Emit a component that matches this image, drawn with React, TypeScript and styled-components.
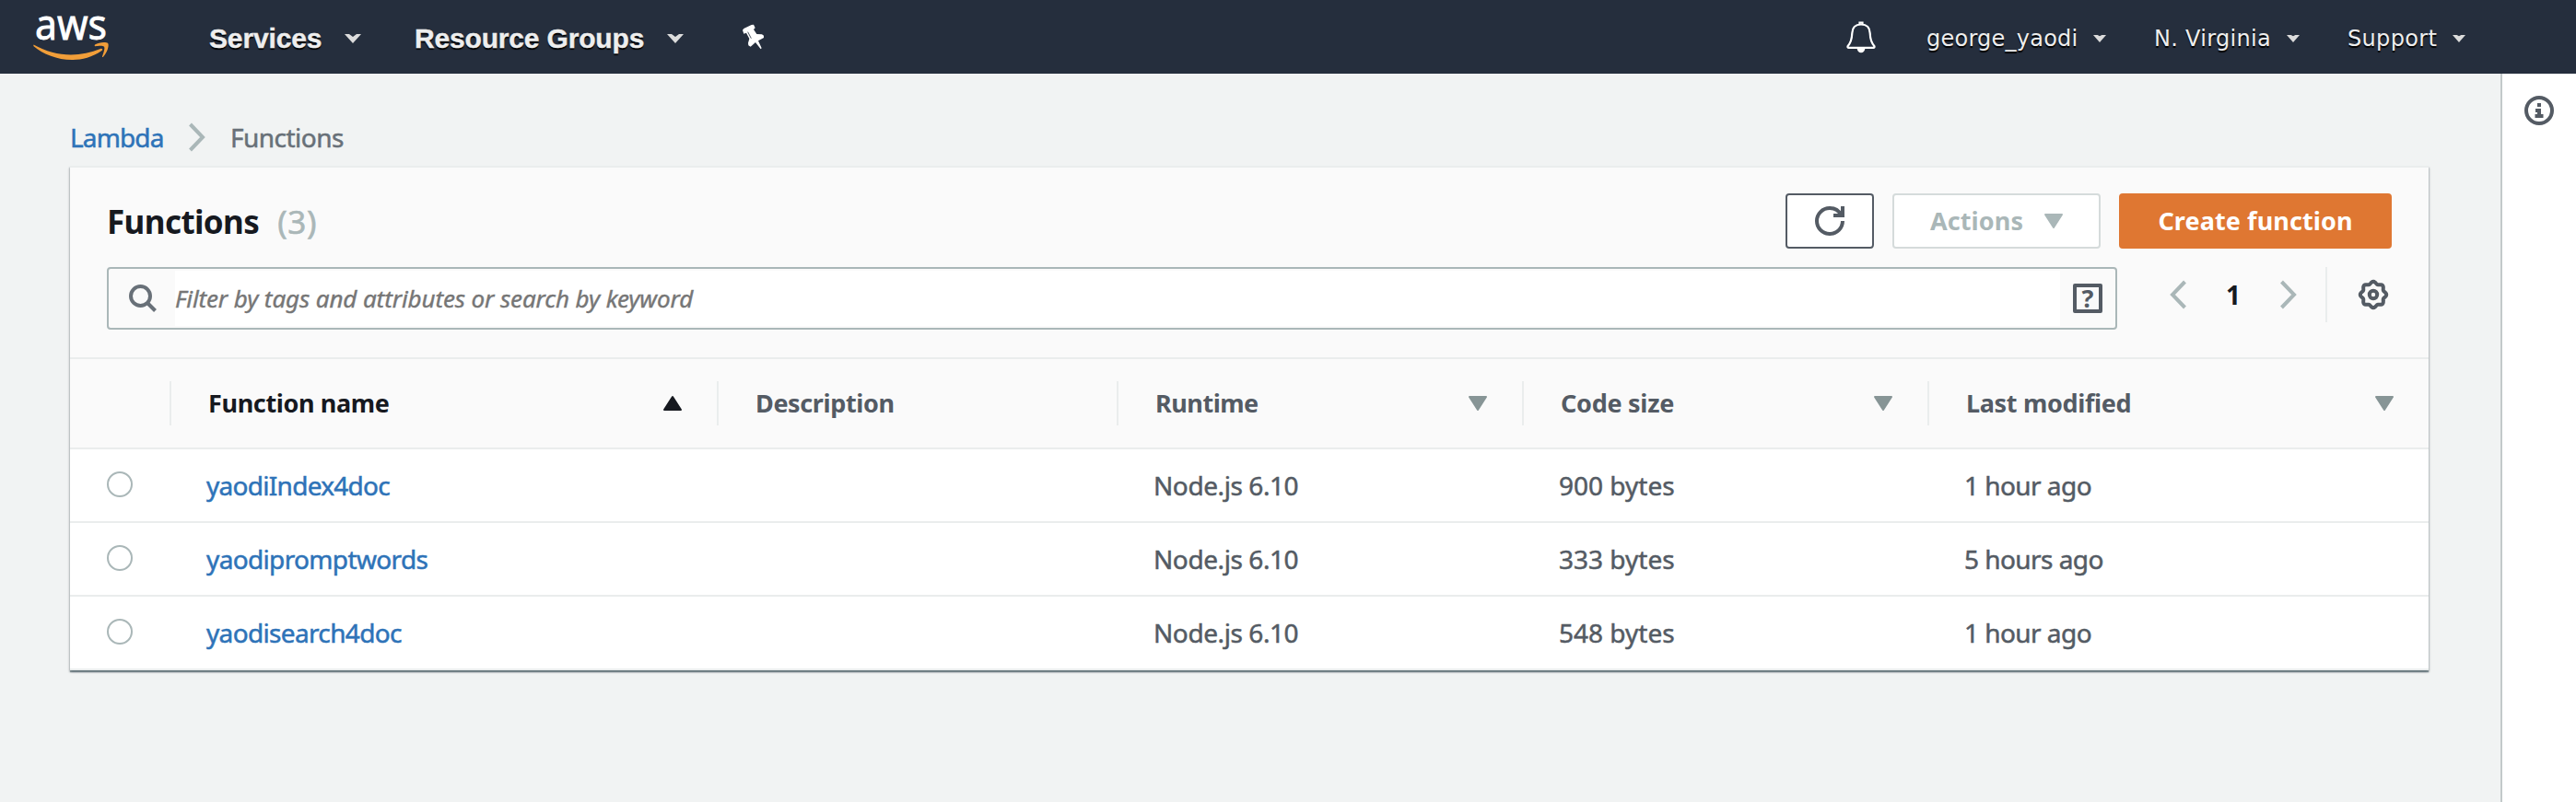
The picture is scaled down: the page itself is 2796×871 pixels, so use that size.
import React from 'react';
import styled, { createGlobalStyle } from 'styled-components';

const GlobalStyle = createGlobalStyle`
  * { box-sizing: border-box; }
  body {
    margin: 0;
    background: #f1f3f3;
    font-family: 'Noto Sans', 'Open Sans', sans-serif;
    font-size: 28px;
    color: #545b64;
  }
  svg { display: block; flex: none; overflow: visible; }
`;

const Page = styled.div`
  display: flex;
  flex-direction: column;
  height: 871px;
  overflow: hidden;
`;

const NavBar = styled.header`
  display: flex;
  align-items: center;
  justify-content: space-between;
  flex: none;
  height: 80px;
  padding: 4px 120px 0 36px;
  background: #252e3d;
`;

const NavGroup = styled.div`
  display: flex;
  align-items: center;
  height: 76px;
`;

const Logo = styled.svg`
  margin-top: -7px;
  margin-right: 107px;
`;

const NavItem = styled.div<{ $width: number; $gap: number; $strong?: boolean; $track?: number }>`
  display: flex;
  align-items: center;
  justify-content: space-between;
  width: ${p => p.$width}px;
  margin-right: ${p => p.$gap}px;
  font-family: ${p => (p.$strong ? "'Liberation Sans'" : "'DejaVu Sans'")}, sans-serif;
  font-size: ${p => (p.$strong ? 30 : 24)}px;
  font-weight: ${p => (p.$strong ? 700 : 400)};
  -webkit-text-stroke: ${p => (p.$strong ? 0.4 : 0)}px #eee;
  letter-spacing: ${p => p.$track ?? 0}px;
  line-height: 40px;
  color: #eee;
  text-shadow: 0 2px 1px #000;
  white-space: nowrap;
`;

const Bell = styled.svg`
  margin: -2px 55px 0 0;
`;

const Pin = styled.svg`
  margin-top: -4px;
`;

const Body = styled.div`
  display: flex;
  flex: 1;
`;

const Main = styled.main`
  flex: 1;
  padding: 46px 78px 0 76px;
`;

const HelpRail = styled.aside`
  width: 82px;
  padding: 24px 0 0 24px;
  background: #fff;
  border-left: 2px solid #c3c9ca;
`;

const Breadcrumb = styled.nav`
  display: flex;
  align-items: center;
  height: 46px;
  margin-bottom: 8px;
  line-height: 46px;
  -webkit-text-stroke: 0.5px;
`;

const CrumbLink = styled.a`
  width: 129px;
  letter-spacing: -0.86px;
  color: #2e73b8;
`;

const Crumb = styled.span`
  margin-left: 27px;
  letter-spacing: -0.52px;
  color: #687078;
`;

const Card = styled.section`
  border-top: 2px solid #eaeded;
  background: #fff;
  box-shadow: 0 2px 1px rgba(0, 28, 36, 0.32), 1px 2px 2px rgba(0, 28, 36, 0.22), -1px 2px 2px rgba(0, 28, 36, 0.22);
`;

const CardHeader = styled.div`
  height: 208px;
  padding: 28px 40px 0;
  background: #fafafa;
  border-bottom: 2px solid #eaeded;
`;

const TitleRow = styled.div`
  display: flex;
  align-items: center;
  height: 60px;
  margin-bottom: 20px;
`;

const Title = styled.h2`
  flex: 1;
  margin: 2px 0 0;
  font-size: 35px;
  line-height: 60px;
  letter-spacing: -0.6px;
  color: #16191f;
`;

const Count = styled.span`
  margin-left: 20px;
  font-weight: 400;
  letter-spacing: 0.6px;
  -webkit-text-stroke: 0.6px;
  color: #aab7b8;
`;

const Button = styled.button<{ $width: number; $kind: 'normal' | 'disabled' | 'primary' }>`
  display: flex;
  align-items: center;
  justify-content: center;
  width: ${p => p.$width}px;
  height: 60px;
  margin: 0 0 0 20px;
  padding: 0;
  border: 2px solid ${p => ({ normal: '#545b64', disabled: '#d5dbdb', primary: '#df7732' })[p.$kind]};
  border-radius: 4px;
  background: ${p => (p.$kind === 'primary' ? '#df7732' : '#fff')};
  color: ${p => ({ normal: '#545b64', disabled: '#aab7b8', primary: '#fff' })[p.$kind]};
  font: 700 27px/54px 'Noto Sans', sans-serif;
  gap: 23px;
`;

const ButtonLabel = styled.span<{ $track: number }>`
  letter-spacing: ${p => p.$track}px;
`;

const FilterRow = styled.div`
  display: flex;
  align-items: flex-start;
`;

const SearchBox = styled.div`
  display: flex;
  align-items: center;
  width: 2182px;
  height: 68px;
  padding-left: 22px;
  border: 2px solid #aab7b8;
  border-radius: 4px;
`;

const SearchInput = styled.div`
  width: 2046px;
  height: 60px;
  margin: 0 14px 0 20px;
  background: #fff;
  color: #767676;
  font-size: 26px;
  font-style: italic;
  line-height: 60px;
  letter-spacing: -0.11px;
  -webkit-text-stroke: 0.4px;
`;

const Pager = styled.div`
  display: flex;
  align-items: center;
  height: 60px;
  width: 228px;
  padding-left: 57px;
  border-right: 2px solid #eaeded;
`;

const PageNumber = styled.span`
  width: 102px;
  text-align: center;
  font-size: 28px;
  font-weight: 700;
  line-height: 60px;
  color: #16191f;
`;

const Gear = styled.svg`
  margin: 14px 0 0 34px;
`;

const Columns = styled.div`
  display: grid;
  grid-template-columns: 110px 594px 434px 440px 440px 1fr;
  align-items: center;
`;

const HeadRow = styled(Columns)`
  height: 98px;
  background: #fafafa;
  border-bottom: 2px solid #eaeded;
`;

const HeadCell = styled.div<{ $active?: boolean; $last?: boolean; $track?: number }>`
  display: flex;
  align-items: center;
  justify-content: space-between;
  height: 48px;
  padding: 0 38px 0 40px;
  border-right: ${p => (p.$last ? 0 : 2)}px solid #eaeded;
  color: ${p => (p.$active ? '#16191f' : '#545b64')};
  font-size: 27px;
  font-weight: 700;
  line-height: 46px;
  letter-spacing: ${p => p.$track ?? 0}px;
  white-space: nowrap;
`;

const Row = styled(Columns)`
  height: 80px;
  border-bottom: 2px solid #eaeded;
  background: #fff;
`;

const Radio = styled.span`
  width: 28px;
  height: 28px;
  margin: -2px 0 0 40px;
  border: 2px solid #aab7b8;
  border-radius: 50%;
`;

const Cell = styled.div<{ $track?: number }>`
  padding-left: 38px;
  line-height: 78px;
  letter-spacing: ${p => p.$track ?? 0}px;
  -webkit-text-stroke: 0.5px;
`;

const NameLink = styled.a`
  color: #2e73b8;
`;

const NavCaret = ({ small }: { small?: boolean }) => (
  <svg width={small ? 14 : 18} height={small ? 8 : 10} viewBox="0 0 18 10" preserveAspectRatio="none">
    <path d={small ? 'M0 0H6L9 1.5L12 0H18L9 10Z' : 'M0 0H5L9 3L13 0H18L9 10Z'} fill="#dcdcdc" />
  </svg>
);

const Angle = ({ left }: { left?: boolean }) => (
  <svg width="18" height="32" viewBox="0 0 18 32" fill="none" stroke="#aab7b8" strokeWidth="4">
    <path d={left ? 'M16.5 2L3 16L16.5 30' : 'M1.5 2L15 16L1.5 30'} />
  </svg>
);

const Triangle = ({ up, color }: { up?: boolean; color: string }) => (
  <svg width="20" height="16" viewBox="0 0 20 16" fill={color} stroke={color} strokeWidth="2" strokeLinejoin="round">
    <path d={up ? 'M1 15H19L10 1Z' : 'M1 1H19L10 15Z'} />
  </svg>
);

const gearPath = Array.from({ length: 96 }, (_, i) => {
  const a = (i / 96) * Math.PI * 2;
  const r = 13 + 1.2 * Math.cos(a * 8);
  return `${i ? 'L' : 'M'}${(16 + r * Math.sin(a)).toFixed(2)} ${(16 - r * Math.cos(a)).toFixed(2)}`;
}).join('') + 'Z';

const heads = [
  { label: 'Function name', track: -0.36, sort: 'up' },
  { label: 'Description', track: -0.38, sort: '' },
  { label: 'Runtime', track: -0.47, sort: 'down' },
  { label: 'Code size', track: -0.27, sort: 'down' },
  { label: 'Last modified', track: -0.33, sort: 'down' },
];

const rows = [
  { name: 'yaodiIndex4doc', track: -0.72, size: '900 bytes', modified: '1 hour ago' },
  { name: 'yaodipromptwords', track: -0.65, size: '333 bytes', modified: '5 hours ago' },
  { name: 'yaodisearch4doc', track: -0.66, size: '548 bytes', modified: '1 hour ago' },
];

export default function App() {
  return (
    <Page>
      <GlobalStyle />
      <NavBar>
        <NavGroup>
          <Logo width="84" height="56" viewBox="0 0 84 56">
            <text x="2" y="32" textLength="78" lengthAdjust="spacingAndGlyphs" fontSize="45" fontFamily="'Noto Sans', sans-serif" fill="#fff" stroke="#fff" strokeWidth="0.8">aws</text>
            <path d="M0.500 37.500C24 51 50 51.500 73 42C75 41.400 76 42.800 74.500 44C64 51.500 52 54.200 42 54C26 53.700 11 48 0.300 38.900Z" fill="#f19e39" />
            <path d="M67 37.500C71 34.800 79 34.200 81.200 36C82.800 39 80 46.500 76 50.800C75.200 51.300 74.700 50.900 75.100 50C76.500 46.300 78.200 41 77 39.700C75.500 38.300 70.500 38.900 67.700 39.200C66.700 39.300 66.300 38.500 67 37.500Z" fill="#f19e39" />
          </Logo>
          <NavItem $strong $width={165} $gap={58} $track={-0.15}>Services<NavCaret /></NavItem>
          <NavItem $strong $width={292} $gap={63} $track={-0.17}>Resource Groups<NavCaret /></NavItem>
          <Pin width="25" height="28" viewBox="1124 78 75 84" fill="#fff">
            <path d="M1127 98L1131 93L1156 81L1163 80L1168 91L1163 96L1173 111L1190 112L1196 116V123L1178 133L1189 157L1186 160L1169 138L1153 152L1146 148L1145 140L1149 126L1139 107L1131 110Z" />
            <path d="M1144 104L1155 125" stroke="#252e3d" strokeWidth="2.500" />
          </Pin>
        </NavGroup>
        <NavGroup>
          <Bell width="32" height="36" viewBox="0 0 32 36" fill="none" stroke="#fff" strokeWidth="2.200">
            <path d="M16 3.500C9.500 3.500 6.500 7.500 6.300 13C6 21 4 24.500 1.500 27.300Q1.200 28.800 2.500 28.800H29.500Q30.800 28.800 30.500 27.300C28 24.500 26 21 25.700 13C25.500 7.500 22.500 3.500 16 3.500Z" />
            <path d="M14.500 3V1.500H17.500V3" />
            <path d="M11.500 29C12 36 20 36 20.500 29Z" fill="#fff" stroke="none" />
          </Bell>
          <NavItem $width={195} $gap={52} $track={0.24}>george_yaodi<NavCaret small /></NavItem>
          <NavItem $width={158} $gap={52} $track={0.3}>N. Virginia<NavCaret small /></NavItem>
          <NavItem $width={128} $gap={0} $track={0.32}>Support<NavCaret small /></NavItem>
        </NavGroup>
      </NavBar>
      <Body>
        <Main>
          <Breadcrumb>
            <CrumbLink>Lambda</CrumbLink>
            <Angle />
            <Crumb>Functions</Crumb>
          </Breadcrumb>
          <Card>
            <CardHeader>
              <TitleRow>
                <Title>Functions<Count>(3)</Count></Title>
                <Button $kind="normal" $width={96}>
                  <svg width="32" height="32" viewBox="0 0 16 16" fill="none" stroke="currentColor" strokeWidth="2">
                    <path d="M10 5h5V0" />
                    <path d="M15 8a6.957 6.957 0 0 1-7 7 6.957 6.957 0 0 1-7-7 6.957 6.957 0 0 1 7-7 6.870 6.870 0 0 1 6.300 4" />
                  </svg>
                </Button>
                <Button $kind="disabled" $width={226}>
                  <ButtonLabel $track={0.1}>Actions</ButtonLabel>
                  <Triangle color="#aab7b8" />
                </Button>
                <Button $kind="primary" $width={296}>
                  <ButtonLabel $track={0.1}>Create function</ButtonLabel>
                </Button>
              </TitleRow>
              <FilterRow>
                <SearchBox>
                  <svg width="30" height="30" viewBox="0 0 30 30" fill="none" stroke="#687078" strokeWidth="4">
                    <circle cx="12.500" cy="12.500" r="10.500" />
                    <path d="M19.500 19.500L28.500 28.500" />
                  </svg>
                  <SearchInput>Filter by tags and attributes or search by keyword</SearchInput>
                  <svg width="32" height="32" viewBox="0 0 32 32">
                    <rect x="2" y="2" width="28" height="28" fill="none" stroke="#545b64" strokeWidth="4" strokeLinejoin="round" />
                    <text x="16" y="26" textAnchor="middle" fontFamily="'Noto Sans', sans-serif" fontSize="27" fontWeight="700" fill="#545b64">?</text>
                  </svg>
                </SearchBox>
                <Pager>
                  <Angle left />
                  <PageNumber>1</PageNumber>
                  <Angle />
                </Pager>
                <Gear width="32" height="32" viewBox="0 0 32 32" fill="none" stroke="#545b64" strokeWidth="4">
                  <path d={gearPath} />
                  <circle cx="16" cy="16" r="4.200" />
                </Gear>
              </FilterRow>
            </CardHeader>
            <HeadRow>
              <HeadCell />
              {heads.map((h, i) => (
                <HeadCell key={h.label} $active={h.sort === 'up'} $last={i === heads.length - 1} $track={h.track}>
                  {h.label}
                  {h.sort && <Triangle up={h.sort === 'up'} color={h.sort === 'up' ? '#16191f' : '#879596'} />}
                </HeadCell>
              ))}
            </HeadRow>
            {rows.map(r => (
              <Row key={r.name}>
                <Radio />
                <Cell $track={r.track}><NameLink>{r.name}</NameLink></Cell>
                <Cell />
                <Cell $track={-0.42}>Node.js 6.10</Cell>
                <Cell>{r.size}</Cell>
                <Cell $track={-0.55}>{r.modified}</Cell>
              </Row>
            ))}
          </Card>
        </Main>
        <HelpRail>
          <svg width="32" height="32" viewBox="0 0 32 32" fill="none" stroke="#545b64" strokeWidth="4">
            <circle cx="16" cy="16" r="14" />
            <path d="M14 10H18M12 16H18M11.500 22H20.500M16 14V23" />
          </svg>
        </HelpRail>
      </Body>
    </Page>
  );
}
